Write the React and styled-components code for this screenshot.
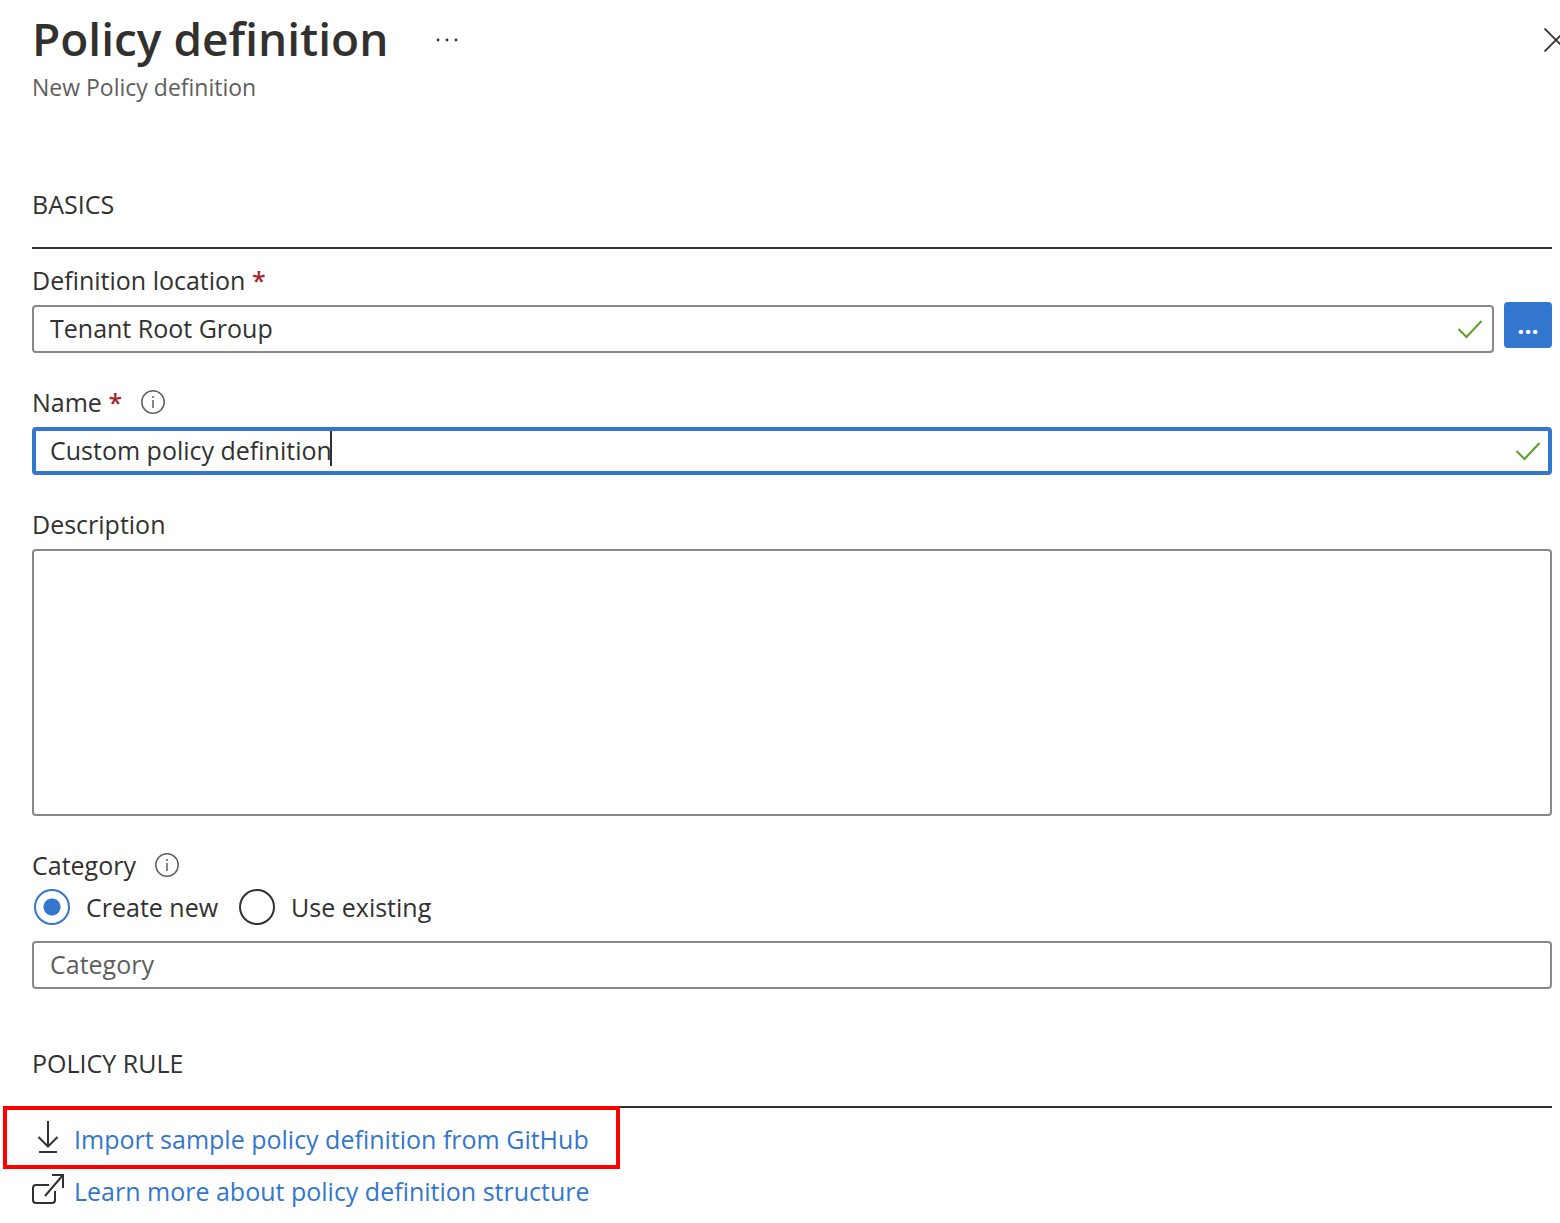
import React, { useState } from "react";
import styled, { createGlobalStyle } from "styled-components";

const ink = "#323130";
const muted = "#605e5c";
const line = "#8a8886";
const blue = "#3376cd";

const GlobalStyle = createGlobalStyle`
  *, *::before, *::after { box-sizing: border-box; }
  body {
    margin: 0;
    background: #fff;
    color: ${ink};
    font: 400 25px/36px "Segoe UI", "Open Sans", "Noto Sans", sans-serif;
  }
  button, input, textarea { font: inherit; color: inherit; }
`;

const Page = styled.main`
  padding: 6px 8px 8px 32px;
  overflow: hidden;
`;

const Header = styled.header`
  display: grid;
  grid-template-columns: auto auto 1fr;
  align-items: center;
  margin-bottom: 82px;
`;

const Title = styled.h1`
  margin: 0;
  font-size: 46px;
  line-height: 64px;
  font-weight: 600;
`;

const Subtitle = styled.p`
  grid-column: 1 / -1;
  margin: 0;
  font-size: 23px;
  line-height: 34px;
  color: ${muted};
`;

const IconButton = styled.button`
  display: flex;
  margin-top: 4px;
  padding: 0;
  border: 0;
  background: none;
  cursor: pointer;
`;

const MoreButton = styled(IconButton)`
  margin-left: 46px;
`;

const CloseButton = styled(IconButton)`
  justify-self: end;
  margin-right: -16px;
`;

const Section = styled.section`
  & + & { margin-top: 56px; }
`;

const SectionTitle = styled.h2`
  margin: 0 0 13px;
  padding-bottom: 25px;
  border-bottom: 2px solid ${ink};
  font-size: 25px;
  line-height: 36px;
  font-weight: 400;
`;

const Field = styled.div`
  & + & { margin-top: 31px; }
`;

const LabelRow = styled.div`
  display: flex;
  align-items: center;
  gap: 18px;
  margin-bottom: ${(p) => (p.$tight ? 6 : 7)}px;
`;

const Required = styled.span`
  color: #a4262c;
  font-weight: 600;
`;

const ControlRow = styled.div`
  display: flex;
  align-items: flex-start;
  gap: 10px;
`;

const InputBox = styled.div`
  display: flex;
  flex: 1;
  align-items: center;
  height: 48px;
  padding: 0 ${(p) => (p.$active ? 7 : 9)}px 0 ${(p) => (p.$active ? 14 : 16)}px;
  border: ${(p) => (p.$active ? `4px solid ${blue}` : `2px solid ${line}`)};
  border-radius: 4px;
  background: #fff;
`;

const TextInput = styled.input`
  flex: ${(p) => (p.$fit ? "0 1 auto" : "1")};
  field-sizing: ${(p) => (p.$fit ? "content" : "fixed")};
  min-width: 0;
  height: 36px;
  padding: 0 0 2px;
  border: 0;
  outline: 0;
  background: none;
  &::placeholder { color: ${muted}; opacity: 1; }
`;

const Caret = styled.span`
  align-self: flex-start;
  width: 2px;
  height: 35px;
  margin-left: -2px;
  background: ${ink};
`;

const Valid = styled.svg`
  flex: none;
  margin-left: auto;
`;

const TextArea = styled.textarea`
  display: block;
  width: 100%;
  height: 267px;
  padding: 6px 16px;
  border: 2px solid ${line};
  border-radius: 4px;
  outline: 0;
  resize: none;
`;

const BrowseButton = styled.button`
  width: 48px;
  height: 46px;
  margin-top: -3px;
  padding: 0 0 2px;
  border: 0;
  border-radius: 4px;
  background: ${blue};
  color: #fff;
  font-weight: 700;
  line-height: 36px;
  cursor: pointer;
`;

const RadioRow = styled.div`
  display: flex;
  gap: 21px;
  margin-bottom: 16px;
  padding-left: 2px;
`;

const RadioLabel = styled.label`
  display: flex;
  align-items: center;
  gap: 16px;
  cursor: pointer;
`;

const Radio = styled.input`
  appearance: none;
  width: 36px;
  height: 36px;
  margin: 0;
  border: 2px solid ${ink};
  border-radius: 50%;
  &:checked {
    border-color: ${blue};
    background: radial-gradient(circle, ${blue} 8px, transparent 9px);
  }
`;

const Links = styled.div`
  display: flex;
  flex-direction: column;
  align-items: flex-start;
  gap: 16px;
`;

const LinkItem = styled.a`
  position: relative;
  display: flex;
  align-items: center;
  gap: 10px;
  color: ${blue};
  text-decoration: none;
`;

const Highlight = styled.span`
  position: absolute;
  inset: -15px -31px -12px -29px;
  border: 4px solid #f00;
  pointer-events: none;
`;

const LinkIcon = styled.svg`
  flex: none;
`;

const InfoIcon = () => (
  <svg width="26" height="26" viewBox="0 0 26 26" fill="none" role="img" aria-label="Information">
    <circle cx="13" cy="13" r="11.2" stroke={muted} strokeWidth="1.5" />
    <path d="M13 11v8" stroke={muted} strokeWidth="1.5" />
    <circle cx="13" cy="8" r="1" fill={muted} />
  </svg>
);

const CheckIcon = () => (
  <Valid width="26" height="24" viewBox="0 0 26 24" fill="none" aria-hidden="true">
    <path d="M1.5 12l8 8L24.5 4" stroke="#5c9f26" strokeWidth="2" />
  </Valid>
);

export default function App() {
  const [location, setLocation] = useState("Tenant Root Group");
  const [name, setName] = useState("Custom policy definition");
  const [mode, setMode] = useState("new");

  return (
    <Page>
      <GlobalStyle />
      <Header>
        <Title>Policy definition</Title>
        <MoreButton type="button" aria-label="More actions">
          <svg width="26" height="24" viewBox="0 0 26 24" fill={ink}>
            <circle cx="4" cy="12" r="1.4" />
            <circle cx="13" cy="12" r="1.4" />
            <circle cx="22" cy="12" r="1.4" />
          </svg>
        </MoreButton>
        <CloseButton type="button" aria-label="Close">
          <svg width="24" height="24" viewBox="0 0 24 24" fill="none">
            <path d="M.5 .5l23 23M23.5 .5l-23 23" stroke={ink} strokeWidth="1.8" />
          </svg>
        </CloseButton>
        <Subtitle>New Policy definition</Subtitle>
      </Header>

      <Section>
        <SectionTitle>BASICS</SectionTitle>
        <Field>
          <LabelRow>
            <label htmlFor="location">
              Definition location <Required>*</Required>
            </label>
          </LabelRow>
          <ControlRow>
            <InputBox>
              <TextInput id="location" value={location} onChange={(e) => setLocation(e.target.value)} />
              <CheckIcon />
            </InputBox>
            <BrowseButton type="button">...</BrowseButton>
          </ControlRow>
        </Field>
        <Field>
          <LabelRow>
            <label htmlFor="name">
              Name <Required>*</Required>
            </label>
            <InfoIcon />
          </LabelRow>
          <InputBox $active>
            <TextInput id="name" $fit value={name} onChange={(e) => setName(e.target.value)} />
            <Caret />
            <CheckIcon />
          </InputBox>
        </Field>
        <Field>
          <LabelRow>
            <label htmlFor="description">Description</label>
          </LabelRow>
          <TextArea id="description" />
        </Field>
        <Field>
          <LabelRow $tight>
            <label htmlFor="category">Category</label>
            <InfoIcon />
          </LabelRow>
          <RadioRow>
            <RadioLabel>
              <Radio type="radio" name="mode" checked={mode === "new"} onChange={() => setMode("new")} />
              Create new
            </RadioLabel>
            <RadioLabel>
              <Radio type="radio" name="mode" checked={mode === "existing"} onChange={() => setMode("existing")} />
              Use existing
            </RadioLabel>
          </RadioRow>
          <InputBox>
            <TextInput id="category" placeholder="Category" />
          </InputBox>
        </Field>
      </Section>

      <Section>
        <SectionTitle>POLICY RULE</SectionTitle>
        <Links>
          <LinkItem href="#import">
            <LinkIcon width="32" height="36" viewBox="0 0 32 36" fill="none" stroke={ink} strokeWidth="2" aria-hidden="true">
              <path d="M16 0v25M6.500 16l9.500 9.500L25.500 16M7 31h18" />
            </LinkIcon>
            Import sample policy definition from GitHub
            <Highlight />
          </LinkItem>
          <LinkItem href="#learn">
            <LinkIcon width="32" height="36" viewBox="0 0 32 36" fill="none" stroke={ink} strokeWidth="2" aria-hidden="true">
              <path d="M17 12H4a3 3 0 0 0-3 3v12a3 3 0 0 0 3 3h16a3 3 0 0 0 3-3v-9M20 2h11v13M31 2L13 23" />
            </LinkIcon>
            Learn more about policy definition structure
          </LinkItem>
        </Links>
      </Section>
    </Page>
  );
}
